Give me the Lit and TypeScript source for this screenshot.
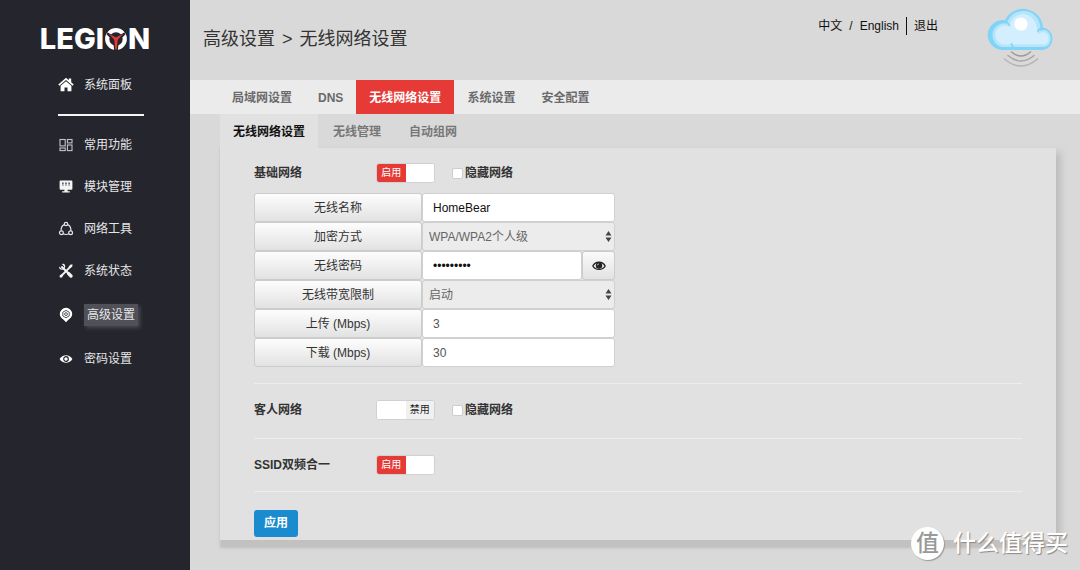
import { LitElement, html, css, svg } from "lit";
import { customElement, property, state } from "lit/decorators.js";
import { classMap } from "lit/directives/class-map.js";

const ICONS: Record<string, unknown> = {
  home: svg`<path fill="#fff" d="M8 .8 0.300 7.400l1.100 1.300L8 3.100l6.600 5.600 1.100-1.300L13.200 5.200V1.600h-2.400v1.600z"/><path fill="#fff" d="M8 4.200 2.600 8.800V14.200h3.900v-3.800h3v3.800h3.900V8.800z"/>`,
  blocks: svg`<g fill="none" stroke="#c4c4c8" stroke-width="1.100"><rect x="2" y="2.500" width="5.200" height="6.400"/><rect x="9.400" y="2.500" width="4.600" height="3.400"/><rect x="2" y="11" width="5.200" height="2.600"/><rect x="9.400" y="8" width="4.600" height="5.600"/></g>`,
  module: svg`<path fill="#f4f4f4" d="M2.600 1.600h10.800q1 0 1 1v7.200q0 1-1 1H9.600v1.400h2.200v1.400H4.200v-1.400h2.200v-1.400H2.600q-1 0-1-1V2.600q0-1 1-1z"/><path stroke="#24242c" stroke-width="1.200" stroke-dasharray="1.600 .5" d="M4.900 3.400v3M8 3.400v3M11.100 3.400v3"/>`,
  network: svg`<g fill="none" stroke="#e6e6e8" stroke-width="1.200"><path d="M6.300 3.600C4 4.600 3 7 3.100 9.700M9.700 3.600c2.300 1 3.300 3.400 3.200 6.100M5.200 12.800c1.800.9 3.800.9 5.600 0"/><circle cx="8" cy="3" r="1.700"/><circle cx="3.400" cy="11.700" r="1.900"/><circle cx="12.600" cy="11.700" r="1.900"/></g>`,
  tools: svg`<g fill="none" stroke="#f4f4f4" stroke-linecap="round"><path stroke-width="1.800" d="M3.200 13 12 4.200"/><path stroke-width="3.400" d="m10.600 10.600 2.400 2.400"/><path stroke-width="2" d="m4 4 6 6"/></g><path fill="#f4f4f4" d="M1.400 3.600 3.600 5.800 5.800 5 6 3.200 4 1.200C6-.2 7.800 2 7 4.600L5 6.600C2.400 7.400.6 5.600 1.400 3.600zM10.600 3.800l2-2.400 2 .2-.4 2.200-2.400 1.600zM1.600 12.400l2-1.200 1.400 1.400-1 2-2.200-.2z"/>`,
  pin: svg`<path fill="#fff" d="M8 .8a6.300 6.300 0 0 1 6.200 6.300c0 2.400-1.600 4.400-3.800 5.600L8 15.200l-2.400-2.500C3.400 11.500 1.800 9.500 1.800 7.100A6.300 6.300 0 0 1 8 .8z"/><path fill="none" stroke="#55555c" d="m8 3.400 3.200 1.800v3.800L8 10.800 4.800 9V5.200z"/><circle cx="8" cy="7.100" r="1.400" fill="none" stroke="#55555c"/>`,
  eye: svg`<path fill="#fff" d="M1.600 8C4.400 2.900 11.600 2.900 14.400 8 11.600 13.100 4.400 13.100 1.600 8z"/><circle cx="8" cy="8" r="2.300" fill="none" stroke="#24242c" stroke-width="1.200"/>`,
};

@customElement("nav-icon")
export class NavIcon extends LitElement {
  @property() name = "home";
  static styles = css`
    :host { display: block; width: 16px; height: 16px; flex: none; }
    .glyph { display: block; width: 16px; height: 16px; }
  `;
  render() {
    return html`<svg class="glyph" viewBox="0 0 16 16" aria-hidden="true">${ICONS[this.name]}</svg>`;
  }
}

@customElement("toggle-switch")
export class ToggleSwitch extends LitElement {
  @property({ type: Boolean }) on = false;
  @property() name = "";
  static styles = css`
    :host { display: block; }
    .switch {
      display: flex; width: 59px; height: 20px; padding: 0; overflow: hidden;
      border: 1px solid #d0d0d0; border-radius: 3px; background: #fff; cursor: pointer;
      font: 10px/18px "Liberation Sans", "Noto Sans CJK SC", sans-serif;
    }
    .word { flex: 1; background: #e63a37; color: #fff; text-align: center; }
    .knob { flex: 1; background: #fff; }
    .off { flex-direction: row-reverse; }
    .off .word { background: #f0f0f0; color: #222; }
  `;
  private flip() { this.on = !this.on; }
  render() {
    return html`<button type="button" role="switch" aria-label=${this.name} aria-checked=${this.on ? "true" : "false"}
      class=${classMap({ switch: true, off: !this.on })} @click=${this.flip}>
      <span class="word">${this.on ? "启用" : "禁用"}</span><span class="knob"></span>
    </button>`;
  }
}

@customElement("app-root")
export class AppRoot extends LitElement {
  @state() private reveal = false;

  static styles = css`
    :host {
      display: flex; position: relative; min-height: 100vh; background: #d9d9d9; color: #333;
      font: 12px/18px "Liberation Sans", "Noto Sans CJK SC", sans-serif;
    }
    * { box-sizing: border-box; }
    a { color: inherit; text-decoration: none; }

    .side { flex: none; width: 190px; padding-top: 24px; background: #25252e; color: #e6e6e6; }
    .logo {
      display: flex; align-items: center; justify-content: center; height: 30px;
      color: #fff; font: 800 29px/30px "Inter", sans-serif;
    }
    .emblem { display: block; width: 24px; height: 24px; }
    .menu { display: flex; flex-direction: column; gap: 24px; padding: 22px 0 0 58px; }
    .item { display: flex; align-items: center; gap: 10px; }
    .rule { width: 86px; height: 2px; margin: -4px 0; background: #f4f4f4; }
    .current { padding: 2px 3px; background: #505058; box-shadow: 2px 2px 4px #4a4a52; }

    .main { flex: 1; min-width: 0; }
    .top { display: flex; justify-content: space-between; height: 80px; padding: 8px 25px 0 13px; }
    .title { display: flex; gap: 7px; margin: 17px 0 0; font-size: 18px; line-height: 28px; font-weight: 400; }
    .tools { display: flex; align-items: flex-start; color: #111; }
    .session { display: flex; gap: 7px; margin: 9px 49px 0 0; }
    .leave { padding-left: 7px; border-left: 1px solid #111; }
    .cloud { display: block; width: 68px; height: 60px; }

    .tabs { display: flex; padding-left: 29px; background: #ebebeb; color: #6a6a6a; font-weight: 700; }
    .tab { padding: 9px 13px 7px; }
    .tabs .on { background: #e63a37; color: #fff; }
    .subtabs { display: flex; gap: 2px; padding-left: 30px; color: #777; font-weight: 700; }
    .subtabs .on { background: #e1e1e1; color: #111; }

    .panel {
      margin: 0 24px 20px 29px; padding: 15px 34px 3px; background: #e1e1e1;
      border-left: 1px solid #cfcfcf; box-shadow: 0 9px 2px -1px #c3c1bf, 5px 4px 7px #bfbdbc;
    }
    .line { display: grid; grid-template-columns: 122px 59px 1fr; align-items: center; height: 20px; }
    .name { margin: 0; font-size: 12px; line-height: 18px; font-weight: 700; }
    .hide { display: flex; align-items: center; gap: 2px; padding-left: 17px; font-weight: 700; }
    .tick {
      appearance: none; width: 11px; height: 11px; margin: 0;
      border: 1px solid #cdcdcd; border-radius: 2px; background: #fff;
    }
    .tick:checked { background: #1b8bd0; }
    .fields { width: 361px; margin: 10px 0 16px; }
    .field { display: flex; height: 29px; }
    .label {
      width: 168px; padding-top: 1px; border: 1px solid #ccc; border-radius: 3px; line-height: 27px; text-align: center;
      background: linear-gradient(#fdfdfd, #e2e2e2);
    }
    .control { position: relative; display: flex; flex: 1; min-width: 0; }
    .box {
      flex: 1; min-width: 0; width: 100%; height: 29px; margin: 0; padding: 0 10px; color: #555;
      border: 1px solid #d0d0d0; border-radius: 3px; background: #fff; font: inherit; outline: 0;
    }
    .strong { color: #111; }
    .pick { appearance: none; padding: 0 6px; background: #ececec; color: #666; }
    .arrows { position: absolute; right: 3px; top: 9px; width: 7px; height: 11px; pointer-events: none; }
    .peek {
      display: grid; place-items: center; width: 33px; padding: 0; border: 1px solid #ccc;
      border-radius: 3px; background: linear-gradient(#fafafa, #e2e2e2);
    }
    .peek-eye { display: block; width: 14px; height: 12px; }
    .split { height: 1px; margin: 0; border: 0; background: #ededed; }
    .guest { margin: 16px 0 18px; }
    .band { margin: 16px 0; }
    .apply {
      display: block; height: 27px; margin-top: 18px; padding: 0 10px; border: 0; border-radius: 3px;
      background: #1b8bd0; color: #fff; font: 700 12px/27px "Liberation Sans", "Noto Sans CJK SC", sans-serif;
    }

    .mark { position: absolute; right: 12px; bottom: 10px; display: flex; align-items: center; gap: 9px; color: #fff; }
    .seal {
      width: 33px; height: 33px; border-radius: 50%; background: #fff; color: #999;
      font-size: 23px; line-height: 33px; text-align: center; box-shadow: 1px 1px 1px #999;
      font-weight: 500;
    }
    .words { font-size: 23px; line-height: 33px; text-shadow: 1px 1px 1px #888; font-weight: 500; }
  `;

  private menuItem(icon: string, text: string, current = false) {
    return html`<a class="item" href="#"><nav-icon name=${icon}></nav-icon>
      <span class=${classMap({ current })}>${text}</span></a>`;
  }

  private arrows() {
    return html`<svg class="arrows" viewBox="0 0 7 11" aria-hidden="true"><path fill="#444" d="M3.500 0 6.500 4.500h-6zM3.500 11l3-4.500h-6z"/></svg>`;
  }

  private toggleReveal() { this.reveal = !this.reveal; }

  render() {
    return html`
      <aside class="side">
        <div class="logo"><span>LEGI</span><svg class="emblem" viewBox="0 0 24 24" role="img" aria-label="O">
          <circle cx="12" cy="12" r="8.800" fill="none" stroke="#fff" stroke-width="4.200"/>
          <path fill="#25252e" d="M3.600 5.200 5.400 6.600 12 9.400 18.600 6.600 20.400 5.200 21.400 7.400 14.800 13.800 13.800 24h-3.600L9.200 13.800 2.600 7.400z"/>
          <path fill="#e63a37" d="M4.600 6.600 12 10.600 19.400 6.600 13.700 12.800 12.800 22.500h-1.600L10.300 12.800z"/></svg><span>N</span></div>
        <nav class="menu">
          ${this.menuItem("home", "系统面板")}
          <div class="rule"></div>
          ${this.menuItem("blocks", "常用功能")}
          ${this.menuItem("module", "模块管理")}
          ${this.menuItem("network", "网络工具")}
          ${this.menuItem("tools", "系统状态")}
          ${this.menuItem("pin", "高级设置", true)}
          ${this.menuItem("eye", "密码设置")}
        </nav>
      </aside>
      <main class="main">
        <header class="top">
          <h1 class="title"><span>高级设置</span><span>&gt;</span><span>无线网络设置</span></h1>
          <div class="tools">
            <div class="session"><a href="#">中文</a><span>/</span><a href="#">English</a><a class="leave" href="#">退出</a></div>
            <svg class="cloud" viewBox="0 0 68 60" aria-hidden="true">
              <path fill="#82d4f7" d="M15 42A15 15 0 1 1 18 12.200 20 20 0 0 1 56 19.500 11.400 11.400 0 0 1 56 42z"/>
              <path fill="#b5e5fb" d="M15 39A12 12 0 1 1 20 15.500C24-2 52-2 53.500 20l-1 3c6-3 11.500 1 11 8 0 5-3 8-7.500 8z"/>
              <path fill="#d3eefc" d="M18 36.500a9.500 9.500 0 1 1 4-18C26 2 47 2 50 20l1 6c5-4 11-1 10.500 5 0 3.500-2 5.500-5 5.500z"/>
              <path fill="none" stroke="#82d4f7" stroke-width="1.500" d="M17 14q4 0 6 4M56 20q-4 0-5.500 4M24.500 35q0 4 4 5"/>
              <circle cx="34" cy="16" r="6.600" fill="#fff"/>
              <g fill="none" stroke-width="1.500" stroke-linecap="round"><path stroke="#999" d="M24.500 44q9.500 8 19 0"/><path stroke="#a6a6a6" d="M21 47.500q13 11 26 0"/><path stroke="#b4b4b4" d="M17.500 51q16.500 14 33 0"/></g>
            </svg>
          </div>
        </header>
        <nav class="tabs">
          <a class="tab" href="#">局域网设置</a><a class="tab" href="#">DNS</a><a class="tab on" href="#">无线网络设置</a><a class="tab" href="#">系统设置</a><a class="tab" href="#">安全配置</a>
        </nav>
        <nav class="subtabs">
          <a class="tab on" href="#">无线网络设置</a><a class="tab" href="#">无线管理</a><a class="tab" href="#">自动组网</a>
        </nav>
        <form class="panel">
          <div class="line"><h2 class="name">基础网络</h2><toggle-switch on name="基础网络"></toggle-switch>
            <label class="hide"><input class="tick" type="checkbox">隐藏网络</label></div>
          <div class="fields">
            <div class="field"><label class="label" for="ssid">无线名称</label>
              <div class="control"><input id="ssid" class="box strong" type="text" value="HomeBear"></div></div>
            <div class="field"><label class="label" for="enc">加密方式</label>
              <div class="control"><select id="enc" class="box pick"><option>WPA/WPA2个人级</option></select>${this.arrows()}</div></div>
            <div class="field"><label class="label" for="key">无线密码</label>
              <div class="control"><input id="key" class="box strong" type=${this.reveal ? "text" : "password"} value="homebear1">
                <button class="peek" type="button" aria-label="显示密码" @click=${this.toggleReveal}>
                  <svg class="peek-eye" viewBox="0 0 14 12"><path fill="none" stroke="#222" stroke-width="1.300" d="M.8 6C3.500 1 10.500 1 13.200 6 10.500 10.600 3.500 10.600.8 6z"/><circle cx="7" cy="5.500" r="3.200" fill="#222"/><path fill="none" stroke="#eee" stroke-width=".8" d="M5.400 5.300Q5.500 4 6.900 3.800"/></svg>
                </button></div></div>
            <div class="field"><label class="label" for="limit">无线带宽限制</label>
              <div class="control"><select id="limit" class="box pick"><option>启动</option></select>${this.arrows()}</div></div>
            <div class="field"><label class="label" for="up">上传 (Mbps)</label>
              <div class="control"><input id="up" class="box" type="text" value="3"></div></div>
            <div class="field"><label class="label" for="down">下载 (Mbps)</label>
              <div class="control"><input id="down" class="box" type="text" value="30"></div></div>
          </div>
          <hr class="split">
          <div class="line guest"><h2 class="name">客人网络</h2><toggle-switch name="客人网络"></toggle-switch>
            <label class="hide"><input class="tick" type="checkbox">隐藏网络</label></div>
          <hr class="split">
          <div class="line band"><h2 class="name">SSID双频合一</h2><toggle-switch on name="SSID双频合一"></toggle-switch></div>
          <hr class="split">
          <button class="apply" type="button">应用</button>
        </form>
      </main>
      <div class="mark"><span class="seal">值</span><span class="words">什么值得买</span></div>
    `;
  }
}
